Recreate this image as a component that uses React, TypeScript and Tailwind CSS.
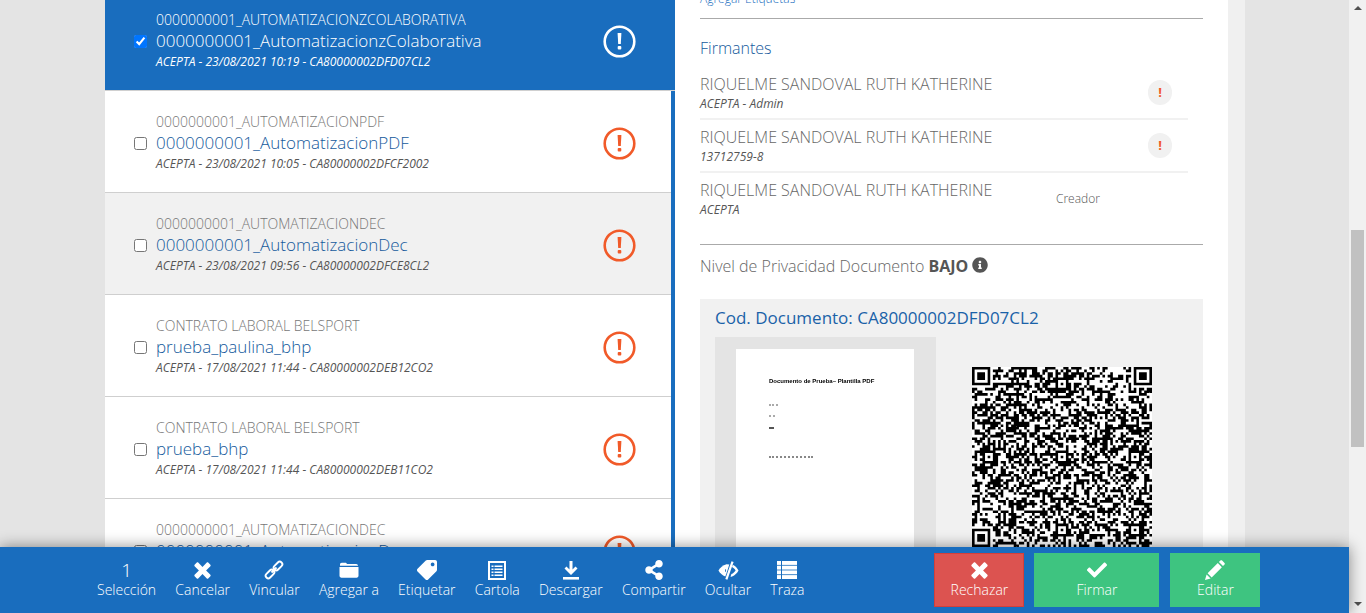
import { FaTag, FaShareAlt, FaCheck, FaInfoCircle } from 'react-icons/fa';
import type { ReactNode } from 'react';

interface Doc {
  type: string;
  name: string;
  meta: string;
}

const docs: Doc[] = [
  { type: '0000000001_AUTOMATIZACIONZCOLABORATIVA', name: '0000000001_AutomatizacionzColaborativa', meta: 'ACEPTA - 23/08/2021 10:19 - CA80000002DFD07CL2' },
  { type: '0000000001_AUTOMATIZACIONPDF', name: '0000000001_AutomatizacionPDF', meta: 'ACEPTA - 23/08/2021 10:05 - CA80000002DFCF2002' },
  { type: '0000000001_AUTOMATIZACIONDEC', name: '0000000001_AutomatizacionDec', meta: 'ACEPTA - 23/08/2021 09:56 - CA80000002DFCE8CL2' },
  { type: 'CONTRATO LABORAL BELSPORT', name: 'prueba_paulina_bhp', meta: 'ACEPTA - 17/08/2021 11:44 - CA80000002DEB12CO2' },
  { type: 'CONTRATO LABORAL BELSPORT', name: 'prueba_bhp', meta: 'ACEPTA - 17/08/2021 11:44 - CA80000002DEB11CO2' },
  { type: '0000000001_AUTOMATIZACIONDEC', name: '0000000001_AutomatizacionDec', meta: 'ACEPTA - 17/08/2021 11:40 - CA80000002DEB10CL2' },
];

const signers = [
  { sub: 'ACEPTA - Admin', alert: true },
  { sub: '13712759-8', alert: true },
  { sub: 'ACEPTA', alert: false },
];

function AlertIcon({ color }: { color: string }) {
  return (
    <svg width="33" height="33" viewBox="0 0 33 33" fill="none">
      <circle cx="16.5" cy="16.5" r="14.8" stroke={color} strokeWidth="2.6" />
      <path d="M14.6 8h3.8l-.6 11h-2.6z" fill={color} />
      <rect x="14.7" y="21" width="3.6" height="3.6" rx="1" fill={color} />
    </svg>
  );
}

function CrossIcon() {
  return (
    <svg width="17" height="17" viewBox="0 0 17 17" fill="white">
      <path d="M4.200.6 8.500 4.900 12.800.6c.4-.4 1-.4 1.400 0l2.200 2.200c.4.4.4 1 0 1.400L12.100 8.500l4.300 4.300c.4.4.4 1 0 1.400l-2.200 2.200c-.4.4-1 .4-1.400 0L8.500 12.100l-4.300 4.300c-.4.4-1 .4-1.400 0L.6 14.200c-.4-.4-.4-1 0-1.400l4.300-4.300L.6 4.200c-.4-.4-.4-1 0-1.400L2.800.6c.4-.4 1-.4 1.400 0z" />
    </svg>
  );
}

function LinkIcon() {
  return (
    <svg width="20" height="20" viewBox="0 0 20 20" fill="none" stroke="white" strokeWidth="1.900">
      <rect x="-5" y="-2.600" width="10" height="5.200" rx="2.600" transform="translate(14 6) rotate(-45)" />
      <rect x="-5" y="-2.600" width="10" height="5.200" rx="2.600" transform="translate(6 14) rotate(-45)" />
      <path d="M7.500 12.500 12.500 7.500" />
    </svg>
  );
}

function FolderIcon() {
  return (
    <svg width="20" height="16" viewBox="0 0 20 16" fill="white">
      <path d="M1 2.500C1 1.400 1.700.7 2.800.7h3.400c.9 0 1.400.5 1.800 1.300h9.200c1 0 1.800.8 1.800 1.800H1z" />
      <path d="M.5 5h19v8.800c0 1.100-.8 1.900-1.900 1.900H2.400c-1.100 0-1.900-.8-1.900-1.900z" />
    </svg>
  );
}

function CartolaIcon() {
  return (
    <svg width="18" height="19" viewBox="0 0 18 19">
      <rect x="1" y="1" width="16" height="17" fill="none" stroke="white" strokeWidth="2" />
      {[4.500, 7.500, 10.500, 13.500].map(y => (
        <g key={y} fill="white">
          <rect x="3.500" y={y} width="2" height="1.500" />
          <rect x="6.500" y={y} width="8" height="1.500" />
        </g>
      ))}
    </svg>
  );
}

function DownloadIcon() {
  return (
    <svg width="16" height="19" viewBox="0 0 16 19" fill="white">
      <path d="M6.500 0h3v8.500l3-3 2 2L8 14 1.500 7.500l2-2 3 3z" />
      <rect x="0" y="16" width="16" height="2.600" />
    </svg>
  );
}

function EyeSlashIcon() {
  return (
    <svg width="21" height="19" viewBox="0 0 21 19">
      {/* mitad izquierda rellena */}
      <path d="M8.500 3.300C4.800 4.300 2 6.800.5 9.500 2 12.300 4.300 14.300 7.300 15.500l1-2.700 1.400-4.200 1.600-5z" fill="white" />
      <path d="M7.300 8c-.5 1-.4 2.200.3 3.100l.5-.7c-.3-.5-.3-1.100-.1-1.700z" fill="#196dbe" />
      <path d="M13.500.3 7.300 18l2.100.7L15.600 1z" fill="white" />
      <path d="M14.800 3.800c2.400 1.100 4.400 3.200 5.700 5.700-1.400 2.700-3.600 4.800-6.400 5.900-.6.200-1.100.3-1.600.4l.9-2.700c1.900-.8 3.200-2 4.200-3.600-.9-1.500-2-2.600-3.600-3.400z" fill="white" />
    </svg>
  );
}

function TrazaIcon() {
  return (
    <svg width="20" height="18" viewBox="0 0 20 18" fill="white">
      {[0, 4.700, 9.400, 14.100].map(y => (
        <g key={y}>
          <rect x="0" y={y} width="4" height="3.900" />
          <rect x="5" y={y} width="15" height="3.900" />
        </g>
      ))}
    </svg>
  );
}

function PencilIcon() {
  return (
    <svg width="20" height="20" viewBox="0 0 20 20" fill="white">
      <path d="M0 20l1.600-5.600 4 4z" />
      <path d="M2.600 13.300 12.800 3.100l4.100 4.100L6.700 17.400z" />
      <path d="M13.900 2l1.500-1.500c.5-.5 1.200-.5 1.700 0l2.400 2.400c.5.5.5 1.200 0 1.700L18 6.100z" />
    </svg>
  );
}

// modulos del QR, no es un codigo real
function buildQr() {
  const size = 69;
  let seed = 104729;
  const next = () => {
    seed = (seed * 1664525 + 1013904223) >>> 0;
    return (seed >>> 24) % 2 === 1;
  };
  const finder = (x: number, y: number, ox: number, oy: number) => {
    const dx = x - ox;
    const dy = y - oy;
    if (dx < -1 || dy < -1 || dx > 7 || dy > 7) return null;
    if (dx < 0 || dy < 0 || dx > 6 || dy > 6) return false;
    return dx === 0 || dy === 0 || dx === 6 || dy === 6 || (dx >= 2 && dx <= 4 && dy >= 2 && dy <= 4);
  };
  const align = (x: number, y: number) => {
    for (const ax of [6, 34, 62]) {
      for (const ay of [6, 34, 62]) {
        if ((ax === 6 && ay === 6) || (ax === 62 && ay === 6) || (ax === 6 && ay === 62)) continue;
        const d = Math.max(Math.abs(x - ax), Math.abs(y - ay));
        if (d <= 2) return d !== 1;
      }
    }
    return null;
  };
  const cells: string[] = [];
  for (let y = 0; y < size; y++) {
    for (let x = 0; x < size; x++) {
      const rnd = next();
      const on = finder(x, y, 0, 0) ?? finder(x, y, 62, 0) ?? finder(x, y, 0, 62) ?? align(x, y) ?? rnd;
      if (on) cells.push(`M${x} ${y}h1v1h-1z`);
    }
  }
  return cells.join('');
}

const qrPath = buildQr();

function Action({ icon, label }: { icon: ReactNode; label: string }) {
  return (
    <div className="flex flex-col items-center text-white">
      <div className="flex h-[22px] items-center justify-center text-[20px]">{icon}</div>
      <span className="text-[14px] font-light leading-[18px] text-white">{label}</span>
    </div>
  );
}

function DocRow({ doc, index }: { doc: Doc; index: number }) {
  const selected = index === 0;
  const rowColor = selected ? 'bg-[#196dbe] border-[#d0d0d0]' : index === 2 ? 'bg-[#f1f1f1] border-[#cfcfcf]' : 'bg-white border-[#cfcfcf]';
  return (
    <div className={`flex h-[102px] items-center border-b pl-[29px] ${rowColor}`}>
      <input type="checkbox" checked={selected} readOnly className="mt-[3px] h-[13px] w-[13px] shrink-0 accent-[#0075ff]" />
      <div className="ml-[9px] w-[447px]">
        <div className={`pt-[1px] text-[14px] font-light leading-[20px] ${selected ? 'text-white' : 'text-[#777]'}`}>{doc.type}</div>
        <div className={`text-[17px] font-light leading-[22px] ${selected ? 'text-white' : 'text-[#155a9c]'}`}>{doc.name}</div>
        <div className={`mt-[1px] text-[12px] italic leading-[18px] ${selected ? 'font-medium text-white' : 'text-[#555]'}`}>{doc.meta}</div>
      </div>
      <div className="mt-[3px] h-[33px]">
        <AlertIcon color={selected ? '#ffffff' : '#f15a29'} />
      </div>
    </div>
  );
}

export default function App() {
  return (
    <div className="flex h-[613px] w-[1366px] overflow-hidden font-['Open_Sans',sans-serif]">
      <div className="relative flex h-full w-[1349px] bg-[#e4e4e4] pl-[105px]">
        {/* lista */}
        <div className="-mt-[11px] h-[640px] w-[570px] shrink-0">
          {docs.map((d, i) => (
            <div key={i} className={i === 0 ? '' : 'border-r-4 border-[#196dbe]'}>
              <DocRow doc={d} index={i} />
            </div>
          ))}
        </div>

        {/* detalle */}
        <div className="h-full w-[553px] shrink-0 bg-white px-[25px]">
          <div className="-mt-[14px] h-[33px] border-b border-[#aaa] pt-[4px]">
            <div className="text-[12px] font-light leading-[18px] text-[#196dbe]">Agregar Etiquetas</div>
          </div>
          <h2 className="mt-[17px] text-[16px] font-light leading-[24px] text-[#155a9c]">Firmantes</h2>
          <div className="mt-[8px] w-[488px]">
            {signers.map((s, i) => (
              <div key={i} className={`mb-[1px] flex h-[52px] items-start border-b-2 ${i < 2 ? 'border-[#f1f1f1]' : 'border-transparent'}`}>
                <div className="w-[356px] pt-[4px]">
                  <div className="text-[16px] font-light leading-[24px] text-[#666]">RIQUELME SANDOVAL RUTH KATHERINE</div>
                  <div className="text-[12px] italic leading-[16px] text-[#555]">{s.sub}</div>
                </div>
                {s.alert ? (
                  <div className="ml-[92px] mt-[12px] flex h-[25px] w-[24px] items-center justify-center rounded-full bg-[#f1f1f1] text-[13px] font-bold text-[#f15a29]">!</div>
                ) : (
                  <div className="mt-[16px] text-[12px] font-light leading-[18px] text-[#555]">Creador</div>
                )}
              </div>
            ))}
          </div>
          <div className="mt-[18px] border-t border-[#aaa] pt-[9px]">
            <div className="flex items-center text-[16px] leading-[24px] text-[#666]">
              <span className="font-light">Nivel de Privacidad Documento&nbsp;</span>
              <span className="font-bold text-[#555]">BAJO</span>
              <FaInfoCircle className="ml-[4px] -mt-[2px] text-[16px] text-[#555]" />
            </div>
          </div>
          <div className="mt-[21px] h-[320px] bg-[#f1f1f1] pl-[15px] pt-[7px]">
            <div className="text-[17px] leading-[24px] text-[#1a62a8]">Cod. Documento: CA80000002DFD07CL2</div>
            <div className="mt-[7px] flex">
              <div className="h-[260px] w-[221px] bg-[#e4e4e4] pl-[21px] pt-[12px]">
                <div className="h-[248px] w-[178px] bg-white pl-[33px] pt-[28px] text-black">
                  <div className="font-['Liberation_Sans',sans-serif] text-[6px] font-bold leading-[8px] blur-[0.3px]">Documento de Prueba– Plantilla PDF</div>
                  <div className="mt-[19px] h-0 w-[9px] border-t-2 border-dotted border-[#aaa]" />
                  <div className="mt-[9px] h-0 w-[6px] border-t-2 border-dotted border-[#aaa]" />
                  <div className="mt-[10px] h-0 w-[5px] border-t-2 border-[#555]" />
                  <div className="mt-[27px] h-0 w-[44px] border-t-2 border-dotted border-[#888]" />
                </div>
              </div>
              <div className="ml-[36px] mt-[30px] h-[180px] w-[180px]">
                <svg width="180" height="180" viewBox="0 0 69 69">
                  <rect width="69" height="69" fill="white" />
                  <path d={qrPath} fill="black" />
                </svg>
              </div>
            </div>
          </div>
        </div>
        <div className="h-full w-[17px] shrink-0 bg-[#f0f0f0]" />

        {/* barra de acciones */}
        <div className="absolute bottom-0 left-0 flex h-[66px] w-[1349px] items-start bg-[#196dbe] pl-[97px] shadow-[0_0_14px_rgba(0,0,0,0.45)]">
          <div className="flex gap-[19.2px] pt-[12px]">
            <div className="flex flex-col items-center">
              <div className="flex h-[22px] items-center text-[19px] font-light leading-[22px] text-white">1</div>
              <span className="text-[14px] font-light leading-[18px] text-white">Selección</span>
            </div>
            <Action icon={<CrossIcon />} label="Cancelar" />
            <Action icon={<LinkIcon />} label="Vincular" />
            <Action icon={<FolderIcon />} label="Agregar a" />
            <Action icon={<FaTag className="-scale-x-100" />} label="Etiquetar" />
            <Action icon={<CartolaIcon />} label="Cartola" />
            <Action icon={<DownloadIcon />} label="Descargar" />
            <Action icon={<FaShareAlt />} label="Compartir" />
            <Action icon={<EyeSlashIcon />} label="Ocultar" />
            <Action icon={<TrazaIcon />} label="Traza" />
          </div>
          <div className="ml-[130px] mt-[6px] flex">
            <button className="flex h-[54px] w-[90px] flex-col items-center border border-[#d43f3a] bg-[#dc5350] pt-[5px]">
              <Action icon={<CrossIcon />} label="Rechazar" />
            </button>
            <button className="ml-[10px] flex h-[54px] w-[125px] flex-col items-center bg-[#3ec480] pt-[6px]">
              <Action icon={<FaCheck />} label="Firmar" />
            </button>
            <button className="ml-[11px] flex h-[54px] w-[90px] flex-col items-center bg-[#3ec480] pt-[6px]">
              <Action icon={<PencilIcon />} label="Editar" />
            </button>
          </div>
        </div>
      </div>

      {/* scrollbar */}
      <div className="flex h-full w-[17px] shrink-0 flex-col items-center bg-[#f1f1f1]">
        <div className="mt-[6px] h-0 w-0 border-x-[4px] border-b-[4px] border-x-transparent border-b-[#505050]" />
        <div className="mt-[220px] h-[217px] w-[13px] bg-[#c1c1c1]" />
        <div className="mt-[155px] h-0 w-0 border-x-[4px] border-t-[4px] border-x-transparent border-t-[#505050]" />
      </div>
    </div>
  );
}
